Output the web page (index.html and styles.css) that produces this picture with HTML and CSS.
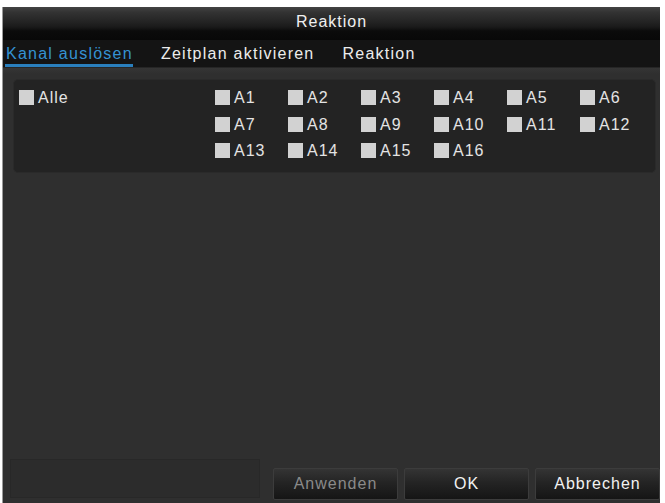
FILE: index.html
```
<!DOCTYPE html>
<html lang="de">
<head>
<meta charset="utf-8">
<title>Reaktion</title>
<link rel="stylesheet" href="styles.css">
</head>
<body>
<div class="window">
  <div class="titlebar">Reaktion</div>
  <div class="tabs">
    <div class="tab active">Kanal auslösen</div>
    <div class="tab">Zeitplan aktivieren</div>
    <div class="tab">Reaktion</div>
  </div>
  <div class="content">
    <div class="panel">
      <div class="alle"><span class="box"></span><span class="lbl">Alle</span></div>
      <div class="grid">
        <div class="item"><span class="box"></span><span class="lbl">A1</span></div>
        <div class="item"><span class="box"></span><span class="lbl">A2</span></div>
        <div class="item"><span class="box"></span><span class="lbl">A3</span></div>
        <div class="item"><span class="box"></span><span class="lbl">A4</span></div>
        <div class="item"><span class="box"></span><span class="lbl">A5</span></div>
        <div class="item"><span class="box"></span><span class="lbl">A6</span></div>
        <div class="item"><span class="box"></span><span class="lbl">A7</span></div>
        <div class="item"><span class="box"></span><span class="lbl">A8</span></div>
        <div class="item"><span class="box"></span><span class="lbl">A9</span></div>
        <div class="item"><span class="box"></span><span class="lbl">A10</span></div>
        <div class="item"><span class="box"></span><span class="lbl">A11</span></div>
        <div class="item"><span class="box"></span><span class="lbl">A12</span></div>
        <div class="item"><span class="box"></span><span class="lbl">A13</span></div>
        <div class="item"><span class="box"></span><span class="lbl">A14</span></div>
        <div class="item"><span class="box"></span><span class="lbl">A15</span></div>
        <div class="item"><span class="box"></span><span class="lbl">A16</span></div>
      </div>
    </div>
  </div>
  <div class="footer">
    <div class="statusbox"></div>
    <div class="buttons">
      <div class="btn disabled">Anwenden</div>
      <div class="btn">OK</div>
      <div class="btn">Abbrechen</div>
    </div>
  </div>
</div>
</body>
</html>
```
FILE: styles.css
```
html, body {
  margin: 0;
  padding: 0;
  background: #ffffff;
}
body {
  font-family: "Liberation Sans", Arial, sans-serif;
  font-size: 16px;
  letter-spacing: 1px;
  color: #e6e6e6;
}
.window {
  margin: 7px 0 0 3px;
  width: 657px;
  height: 496px;
  background: #2f2f2f;
  display: flex;
  flex-direction: column;
  box-shadow: -1px 0 0 #9a9a9a;
}
.titlebar {
  height: 33px;
  box-sizing: border-box;
  padding-bottom: 3px;
  display: flex;
  align-items: center;
  justify-content: center;
  background: linear-gradient(to bottom, #444444 0px, #333333 5px, #252525 14px, #1a1a1a 20px, #0b0b0b 24px, #080808 33px);
  color: #f0f0f0;
}
.tabs {
  height: 27px;
  background: #141414;
  display: flex;
  align-items: stretch;
  padding-left: 2px;
  gap: 27px;
  border-bottom: 1px solid #262626;
  letter-spacing: 1.25px;
}
.tab {
  display: flex;
  align-items: center;
  padding: 3px 0 0 1px;
  box-sizing: border-box;
  border-bottom: 3px solid transparent;
  color: #ececec;
}
.tab.active {
  color: #3592d2;
  border-bottom-color: #2a7fbd;
}
.content {
  flex: 1;
  padding: 11px 4px 0 10px;
  background: linear-gradient(to bottom, #353535 0px, #2f2f2f 6px);
}
.panel {
  height: 94px;
  box-sizing: border-box;
  background: #232323;
  border-radius: 5px;
  border: 1px solid #2a2a2a;
  display: flex;
  padding: 10px 0 0 5px;
}
.alle {
  width: 196px;
  display: flex;
  align-items: flex-start;
  gap: 4px;
  height: 16px;
  line-height: 16px;
}
.grid {
  display: grid;
  grid-template-columns: repeat(6, 73px);
  grid-auto-rows: 26.5px;
}
.item {
  display: flex;
  align-items: flex-start;
  gap: 4px;
  line-height: 16px;
}
.box {
  width: 15px;
  height: 15px;
  background: #d2d2d2;
  flex: none;
}
.lbl {
  color: #e4e4e4;
}
.footer {
  height: 45px;
  display: flex;
  align-items: flex-end;
  padding-left: 7px;
  background: #2f2f2f;
}
.statusbox {
  width: 250px;
  height: 39px;
  box-sizing: border-box;
  border: 1px solid #282828;
  background: #2c2c2c;
  margin-bottom: 5px;
}
.buttons {
  display: flex;
  gap: 6px;
  margin-left: 13px;
  margin-bottom: 3px;
}
.btn {
  width: 125px;
  height: 32px;
  box-sizing: border-box;
  border: 1px solid #3c3c3c;
  border-radius: 2px;
  background: linear-gradient(to bottom, #343434 0%, #242424 45%, #151515 100%);
  display: flex;
  align-items: center;
  justify-content: center;
  color: #f2f2f2;
}
.btn.disabled {
  color: #8a8a8a;
}
```
